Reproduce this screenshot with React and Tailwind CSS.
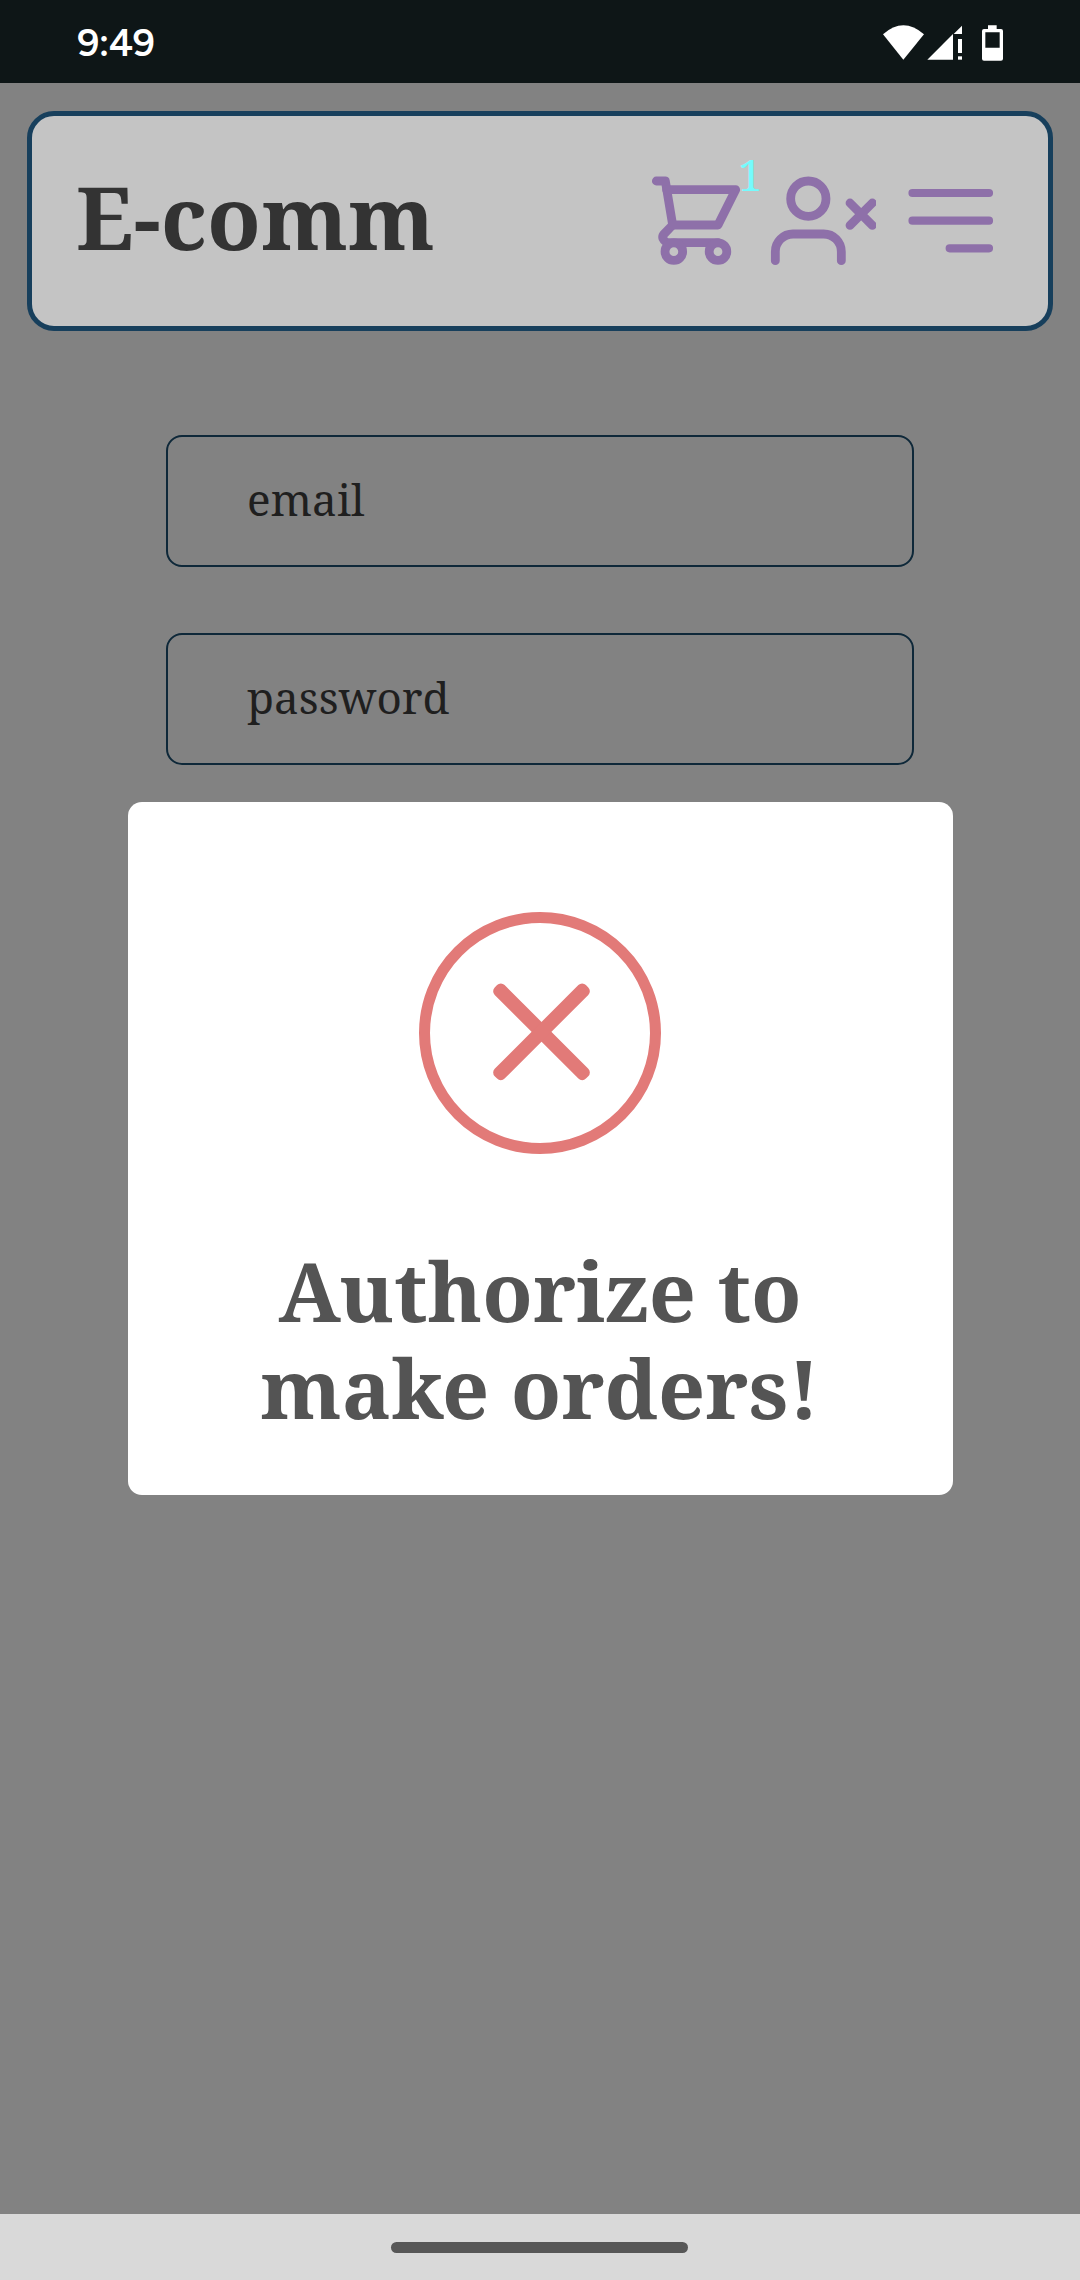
function StatusIcons() {
  return (
    <svg className="h-[38px] w-[122px]" viewBox="126 72 366 114" fill="#fff">
      <path d="M129 103 Q190 49 252 103 L190 179 Z" />
      <path d="M262 179 L339 102 V179 Z" />
      <path d="M341 102 L366 77 V102 Z" />
      <rect x="354" y="117" width="12" height="42" />
      <rect x="354" y="169" width="12" height="10" />
      <path
        fillRule="evenodd"
        d="M444 76 H470 V87 H483 Q489 87 489 93 V176 Q489 182 483 182 H432 Q426 182 426 176 V93 Q426 87 432 87 H444 Z M436 97 V143 H479 V97 Z"
      />
    </svg>
  );
}

function CartIcon() {
  return (
    <svg
      className="h-[90px] w-[92px]"
      viewBox="30 108 276 270"
      fill="none"
      stroke="#8e70a9"
      strokeWidth="26.4"
      strokeLinecap="round"
      strokeLinejoin="round"
    >
      <path d="M49 123 H76 L98 255 L71 283 Q62 296 80 308 H234" />
      <path d="M80 149 H287 L234 255 H98" />
      <circle cx="101.5" cy="335" r="26.4" />
      <circle cx="234" cy="335" r="26.4" />
    </svg>
  );
}

function UserXIcon() {
  return (
    <svg
      className="h-[90px] w-[106px]"
      viewBox="390 108 318 270"
      fill="none"
      stroke="#8e70a9"
      strokeWidth="26.4"
      strokeLinecap="round"
    >
      <circle cx="505" cy="176" r="53" />
      <path d="M406 362 V335 A53 53 0 0 1 459 282 H551 A53 53 0 0 1 604 335 V362" />
      <path d="M630 189 L697 256 M697 189 L630 256" />
    </svg>
  );
}

function MenuIcon() {
  return (
    <svg
      className="h-[90px] w-[88px]"
      viewBox="201 528 264 270"
      fill="none"
      stroke="#8e70a9"
      strokeWidth="24.5"
      strokeLinecap="round"
    >
      <path d="M217.5 579 H447 M217.5 662 H447 M329 745 H447" />
    </svg>
  );
}

function ErrorIcon() {
  return (
    <svg className="mt-[110px] h-[242px] w-[242px]" viewBox="57 66 726 726" fill="#e27a78">
      <circle cx="420" cy="429" r="346.5" fill="none" stroke="#e27a78" strokeWidth="33" />
      <rect x="231" y="404.5" width="387" height="42" rx="16" transform="rotate(45 424.5 425.5)" />
      <rect x="231" y="404.5" width="387" height="42" rx="16" transform="rotate(-45 424.5 425.5)" />
    </svg>
  );
}

function Field({ label }) {
  return (
    <div className="flex h-[132px] w-[748px] items-center rounded-[16px] border-2 border-[#0e2839] pb-1 pl-[79px] text-[44px] leading-[60px] text-[#1f1f1f]">
      {label}
    </div>
  );
}

export default function App() {
  return (
    <div className="flex h-[2280px] w-[1080px] flex-col bg-[#828282] [font-family:'Noto_Serif','DejaVu_Serif_Condensed',serif]">
      <div className="flex h-[83px] items-start justify-between bg-[#0e1617] pr-[76px] pl-[77px]">
        <span className="pt-[19px] text-[39px] leading-[48px] font-semibold tracking-[-0.8px] text-white [font-family:Figtree,Lato,sans-serif]">
          9:49
        </span>
        <div className="pt-6">
          <StatusIcons />
        </div>
      </div>

      <main className="relative flex flex-1 flex-col items-center">
        <header className="mt-7 flex h-[220px] w-[1026px] items-center justify-between rounded-[27px] border-5 border-[#173f5c] bg-[#c4c4c4] pr-[53px] pl-[44px]">
          <h1 className="pb-[10px] text-[88px] leading-[120px] font-bold text-[#333]">E-comm</h1>
          <div className="flex items-center">
            <div className="relative mr-7">
              <CartIcon />
              <span className="absolute top-[-32px] left-[88px] text-[44px] leading-[60px] text-[#75fbfd]">
                1
              </span>
            </div>
            <div className="mr-[31px]">
              <UserXIcon />
            </div>
            <MenuIcon />
          </div>
        </header>

        <form className="mt-[104px] flex flex-col gap-[66px]">
          <Field label="email" />
          <Field label="password" />
        </form>

        <div className="absolute inset-0 flex items-center justify-center">
          <div
            role="dialog"
            className="flex h-[693px] w-[825px] flex-col items-center rounded-[14px] bg-white"
          >
            <ErrorIcon />
            <h2 className="mt-[88px] w-[600px] text-center text-[82.5px] leading-[97px] font-bold text-[#545454]">
              Authorize to make orders!
            </h2>
          </div>
        </div>
      </main>

      <div className="flex h-[66px] items-center justify-center bg-[#d9d9d9] pr-px">
        <div className="h-[11px] w-[297px] rounded-full bg-[#575757]" />
      </div>
    </div>
  );
}
